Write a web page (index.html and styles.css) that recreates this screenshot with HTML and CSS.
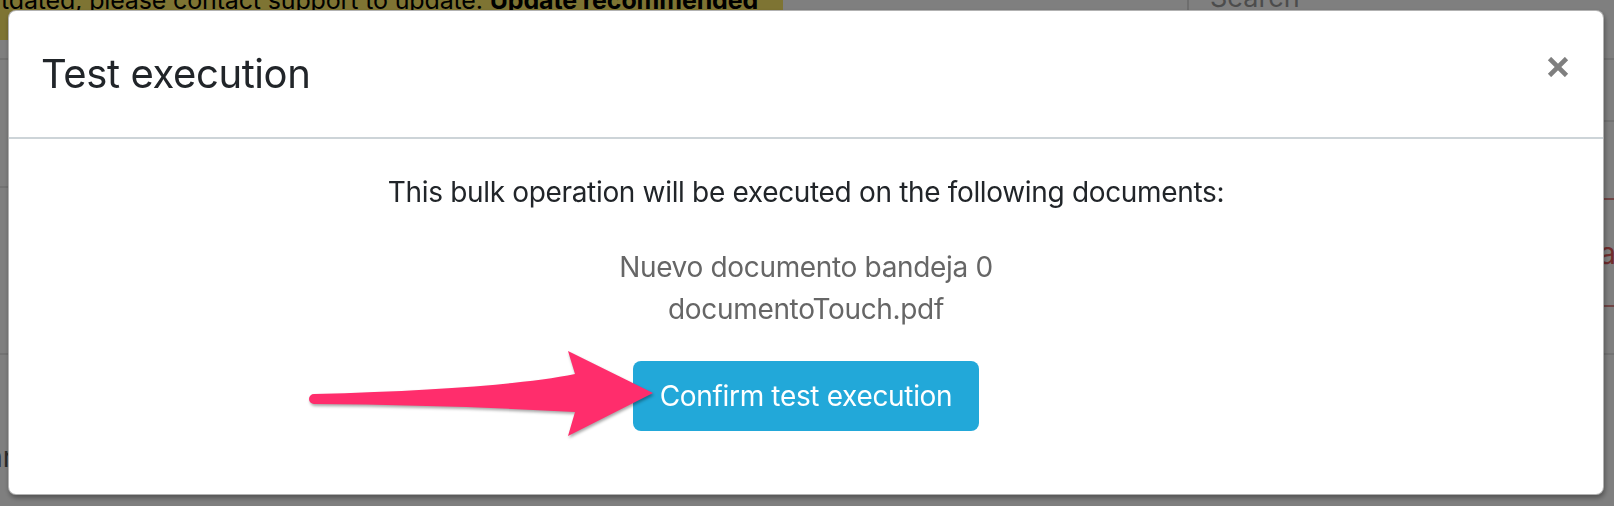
FILE: index.html
```html
<!DOCTYPE html>
<html lang="en">
<head>
<meta charset="utf-8">
<title>Test execution</title>
<link rel="stylesheet" href="styles.css">
</head>
<body>
<div class="app">
  <div class="topbar">
    <div class="banner"><span class="banner-text">tdated, please contact support to update. <b>Update recommended</b></span></div>
    <div class="search"><span class="search-text">Search</span></div>
  </div>
  <div class="content">
    <div class="col col-left">
      <div class="row h20 line"></div>
      <div class="row h128 line"></div>
      <div class="row h167 line"></div>
      <div class="row h80"></div>
      <div class="row tail-text">Buscar</div>
    </div>
    <div class="col col-right">
      <div class="row h20 line"></div>
      <div class="row h62 line"></div>
      <div class="row h78 red"></div>
      <div class="row h107 red red-text">Fecha</div>
      <div class="row h48 line"></div>
    </div>
  </div>
</div>
<div class="backdrop"></div>
<div class="modal">
  <div class="modal-header">
    <h4 class="modal-title">Test execution</h4>
    <button class="close" type="button" aria-label="Close">
      <svg width="22" height="20" viewBox="0 0 22 20"><path d="M2.5 1.5 L19.5 18.5 M19.5 1.5 L2.5 18.5" stroke="#7f7f7f" stroke-width="4.6" fill="none"/></svg>
    </button>
  </div>
  <div class="modal-body">
    <p class="lead-text">This bulk operation will be executed on the following documents:</p>
    <div class="doc-list">
      <div class="doc">Nuevo documento bandeja 0</div>
      <div class="doc">documentoTouch.pdf</div>
    </div>
    <button class="btn-confirm" type="button">Confirm test execution</button>
  </div>
  <svg class="arrow" width="390" height="110" viewBox="0 0 390 110">
    <path d="M33,53 Q220,48 294,33 L287,10 L372,52 L287,95 L294,71 Q170,64 33,63 A5,5 0 0 1 33,53 Z" fill="#ff2d6c"/>
  </svg>
</div>
</body>
</html>
```
FILE: styles.css
```css
html, body {
  margin: 0;
  padding: 0;
}
body {
  width: 1614px;
  height: 506px;
  overflow: hidden;
  font-family: Inter, "Liberation Sans", sans-serif;
  background: #fff;
  color: #212529;
}
.app {
  width: 1614px;
}
.topbar {
  display: flex;
  height: 40px;
}
.banner {
  width: 783px;
  height: 40px;
  background: #fde866;
  overflow: hidden;
}
.banner-text {
  display: block;
  margin-top: -16px;
  margin-left: 1px;
  font-size: 25px;
  line-height: 32px;
  letter-spacing: -0.15px;
  color: #000;
  white-space: nowrap;
}
.search {
  margin-left: 404px;
  border-left: 2px solid #ddd;
  height: 20px;
  overflow: hidden;
  padding-left: 21px;
}
.search-text {
  display: block;
  margin-top: -18px;
  font-size: 27px;
  line-height: 32px;
  color: #999;
}
.content {
  display: grid;
  grid-template-columns: 400px 1fr;
}
.col {
  display: flex;
  flex-direction: column;
}
.row.line {
  border-bottom: 2px solid #e6e6e6;
}
.row.red {
  border-bottom: 2px solid #e08a8a;
}
.h20 { height: 18px; }
.h128 { height: 126px; }
.h167 { height: 165px; }
.h80 { height: 82px; }
.h62 { height: 60px; }
.h78 { height: 76px; }
.h107 { height: 105px; }
.h48 { height: 46px; }
.tail-text {
  font-size: 28px;
  line-height: 40px;
  color: #555;
  margin-left: -79px;
}
.red-text {
  display: flex;
  align-items: center;
  justify-content: flex-end;
  font-size: 30px;
  color: #e05a5a;
  margin-right: -2px;
}
.backdrop {
  position: fixed;
  inset: 0;
  background: rgba(0, 0, 0, 0.5);
}
.modal {
  position: fixed;
  left: 8px;
  top: 10px;
  width: 1596px;
  box-sizing: border-box;
  background: #fff;
  border: 1px solid rgba(0, 0, 0, 0.3);
  border-radius: 8px;
  box-shadow: 1px 3px 5px rgba(0, 0, 0, 0.35);
  letter-spacing: -0.33px;
}
.modal-header {
  display: flex;
  justify-content: space-between;
  align-items: flex-start;
  padding: 33px 34px 33px 32px;
  border-bottom: 2px solid #cdd4d8;
}
.modal-title {
  margin: 0;
  font-size: 40px;
  line-height: 60px;
  font-weight: 400;
  color: #212529;
  letter-spacing: -0.4px;
}
.close {
  margin-top: 13px;
  width: 22px;
  height: 20px;
  border: 0;
  padding: 0;
  background: none;
  display: block;
}
.close svg {
  display: block;
}
.modal-body {
  padding: 32px 32px 63px;
  text-align: center;
  font-size: 28px;
  line-height: 42px;
}
.lead-text {
  margin: 0 0 33px;
  color: #212529;
}
.doc-list {
  color: #666;
}
.btn-confirm {
  margin-top: 31px;
  display: inline-block;
  background: #22a8d9;
  color: #fff;
  border: 0;
  border-radius: 8px;
  font: inherit;
  letter-spacing: -0.33px;
  line-height: 42px;
  padding: 14px 27px;
}
.arrow {
  position: absolute;
  left: 272px;
  top: 330px;
  filter: drop-shadow(1px 2px 1.5px rgba(0, 0, 0, 0.35));
}
```
